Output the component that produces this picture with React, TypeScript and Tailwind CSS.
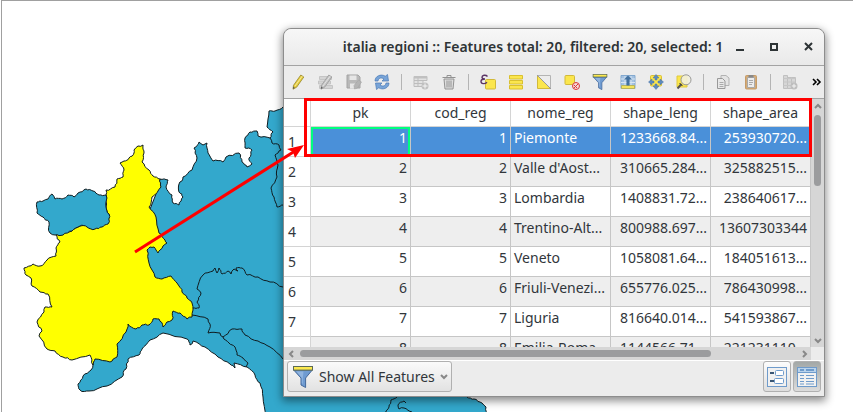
import type { ReactNode } from "react";

type Point = [number, number];

const rows = [
  ["1", "1", "Piemonte", "1233668.84...", "253930720..."],
  ["2", "2", "Valle d'Aost...", "310665.284...", "325882515..."],
  ["3", "3", "Lombardia", "1408831.72...", "238640617..."],
  ["4", "4", "Trentino-Alt...", "800988.697...", "13607303344"],
  ["5", "5", "Veneto", "1058081.64...", "184051613..."],
  ["6", "6", "Friuli-Venezi...", "655776.025...", "786430998..."],
  ["7", "7", "Liguria", "816640.014...", "541593867..."],
  ["8", "8", "Emilia-Roma...", "1144566.71...", "221231110..."],
];
const columns = ["pk", "cod_reg", "nome_reg", "shape_leng", "shape_area"];

const land =
  "160,179 168,180 166,187 172,195 173,203 179,205 183,197 179,192 179,184 183,177 192,170 197,158 194,148 199,142 203,145 207,143 208,153 213,161 223,162 226,157 239,153 242,162 247,167 252,164 249,158 252,150 245,148 245,138 250,132 257,131 258,136 270,138 273,132 267,127 269,111 275,111 283,107 400,107 460,380 467,397 474,399 482,403 486,407 488,416 266,416 263,397 260,383 255,375 247,367 234,363 235,368 230,364 218,357 205,347 193,341 190,345 187,339 163,333 150,340 142,349 139,355 128,359 126,369 122,377 107,386 89,391 80,390 78,384 83,376 91,370 93,365 100,340 140,300 140,240";
const piemonte =
  "106,195 106,190 115,187 117,179 123,177 124,170 120,163 124,161 129,158 134,153 134,150 138,146 143,145 144,153 142,162 149,170 153,176 160,179 161,187 152,197 149,207 156,217 159,233 165,240 167,243 163,246 160,250 158,253 156,250 154,247 150,247 147,250 149,263 155,277 162,279 171,276 177,283 182,292 187,298 192,303 192,317 187,319 180,313 173,311 172,320 167,322 163,327 159,319 153,319 149,325 142,325 136,329 128,324 126,332 117,344 117,357 110,362 95,359 93,365 90,355 72,360 63,357 55,351 47,349 39,336 42,331 37,322 44,312 45,307 52,307 48,294 40,292 32,286 31,278 26,275 24,268 33,264 40,266 47,260 56,256 56,248 60,242 56,235 72,231 80,226 108,223 109,214 106,207";
const valle =
  "37,202 43,201 48,199 52,194 55,199 62,199 68,195 74,197 78,193 86,189 93,191 99,195 106,195 106,207 109,214 108,224 102,227 95,229 87,227 80,226 72,231 63,235 55,235 50,233 49,222 43,217 37,213";
const borders = [
  "270,138 272,143 279,145 281,150 275,155 278,165 277,177 271,188 274,197 277,207 283,205",
  "193,308 199,308 197,302 201,293 197,289 203,275 213,271 215,268 217,273 219,268 222,274 228,271 231,274 234,269 238,271 236,268 242,268 247,275 258,277 270,282 283,287",
  "192,315 208,319 210,324 208,333 220,333 223,337 232,329 242,329 245,335 258,341 270,347 283,359",
  "223,337 229,343 235,347 237,355 243,358 248,363 246,367",
  "384,413 389,407 391,400 397,397",
  "412,412 404,408 399,409 398,405 404,401 406,403",
];

function parse(text: string): Point[] {
  return text.split(" ").map((pair) => pair.split(",").map(Number) as Point);
}

// Splits every segment and nudges the new points so that borders look surveyed.
function coastline(text: string, closed: boolean): string {
  let points = parse(text);
  for (let pass = 0; pass < 2; pass++) {
    const next: Point[] = [];
    points.forEach((a, i) => {
      next.push(a);
      if (i === points.length - 1 && !closed) return;
      const b = points[(i + 1) % points.length];
      const mx = (a[0] + b[0]) / 2;
      const my = (a[1] + b[1]) / 2;
      const length = Math.hypot(b[0] - a[0], b[1] - a[1]);
      if (length < 3) return;
      const wave = Math.sin(mx * 12.9898 + my * 78.233) * 43758.5453;
      const shift = (wave - Math.floor(wave) - 0.5) * Math.min(2, length * 0.4);
      const flip = b[0] > a[0] ? 1 : -1;
      next.push([
        mx - (flip * shift * (b[1] - a[1])) / length,
        my + (flip * shift * (b[0] - a[0])) / length,
      ]);
    });
    points = next;
  }
  return points.map((p) => `${p[0].toFixed(1)},${p[1].toFixed(1)}`).join(" ");
}

function RegionMap() {
  return (
    <svg className="absolute inset-0 h-full w-full" role="img" aria-label="Map of regions">
      <g stroke="#101c20" strokeWidth="1" strokeLinejoin="round">
        <polygon points={coastline(land, true)} fill="#33a8cc" />
        <polygon points={coastline(piemonte, true)} fill="#ffff00" />
        <polygon points={coastline(valle, true)} fill="#33a8cc" />
        {borders.map((b) => (
          <polyline key={b} points={coastline(b, false)} fill="none" />
        ))}
      </g>
    </svg>
  );
}

function Icon({ children }: { children: ReactNode }) {
  return (
    <svg width="16" height="16" viewBox="0 0 16 16" fill="none" aria-hidden="true">
      {children}
    </svg>
  );
}

function Funnel({ size }: { size: number }) {
  return (
    <svg width={size} height={size} viewBox="0 0 20 22" aria-hidden="true">
      <path d="M.7 4h18.6L12.6 12v9.5L8 19v-7z" fill="#6f9bd1" stroke="#44689a" />
      <path d="M3.5 5.5h7L9.8 12v6l-1-1v-5z" fill="#90b4df" />
      <rect x=".5" y=".5" width="19" height="3.6" fill="#fce94f" stroke="#5b6a55" />
    </svg>
  );
}

function Pencil({ fill, edge }: { fill: string; edge: string }) {
  return (
    <>
      <path d="M3.5 11.3 10.8 1l3 2-7.2 10.2-3.6 2z" fill={fill} stroke={edge} strokeWidth=".8" />
      <path d="m5 12 7.3-10" stroke="#fff" strokeOpacity=".5" />
      <path d="m3.3 12.6 1.5 1.2L3 15z" fill="#555" />
    </>
  );
}

const tools: ({ name: string; art: ReactNode } | null)[] = [
  { name: "Toggle editing mode", art: <Pencil fill="#e8cf3c" edge="#94852f" /> },
  {
    name: "Toggle multi edit mode",
    art: (
      <>
        <path d="M1.5 2.5h12v3h-12zM.5 7h12v3H.5zM1.5 11.5h13v3h-13z" fill="#d4d4d4" stroke="#c4c4c4" />
        <Pencil fill="#c4c4c4" edge="#999" />
      </>
    ),
  },
  {
    name: "Save edits",
    art: (
      <>
        <path d="M1 1h11l2 2v11H1z" fill="#b9b9b9" stroke="#a4a4a4" />
        <path d="M3.5 1.5h7V6h-7zM4 9.5h6v5H4z" fill="#e6e6e6" />
        <path d="M8 11.5 12.5 6l3 2-4 6-3 1z" fill="#b4b4b4" stroke="#a4a4a4" strokeWidth=".6" />
      </>
    ),
  },
  {
    name: "Reload the table",
    art: (
      <>
        <path d="M1 7C1 2 7-.5 11.3 2.2L13.5.5l1 6.5H8l2-2C7 3 4.5 4 4 7z" fill="#78a4d8" stroke="#4a7ab4" strokeWidth=".7" />
        <path d="M15 9c0 5-6 7.5-10.3 4.8L2.5 15.5 1.500 9H8l-2 2c3 2 5.500 1 6-2z" fill="#78a4d8" stroke="#4a7ab4" strokeWidth=".7" />
      </>
    ),
  },
  null,
  {
    name: "Add feature",
    art: (
      <>
        <path d="M1 2.500h13v4H1zM1 6.500h9v3H1zM1 9.500h9v3H1zM5 3v9" fill="#e2e2e2" stroke="#bdbdbd" />
        <path d="M1 2h13v2.500H1z" fill="#c0c0c0" />
        <circle cx="12" cy="12" r="3.500" fill="#c0c0c0" />
        <path d="M12 9.500v5M9.500 12h5" stroke="#f5f5f5" />
      </>
    ),
  },
  {
    name: "Delete selected features",
    art: (
      <>
        <path d="M3 5h10l-1 10H4z" fill="#ddd" stroke="#929292" />
        <path d="M1.500 3.500h13M6 3V1.500h4V3M6 6.500v7M8 6.500v7M10 6.500v7" stroke="#929292" />
      </>
    ),
  },
  null,
  {
    name: "Select features using an expression",
    art: (
      <>
        <rect x="5.500" y="5.500" width="10" height="9.500" rx="1" fill="#fbe64d" stroke="#d1b93a" />
        <path d="M7.500 2.500C5.500.3 2 1.300 2 3.200c0 1.300 1.200 1.800 3 1.800C2.500 5 1 6 1 7.500c0 2.500 4 2.800 6 .7" stroke="#5c3566" strokeWidth="1.400" />
      </>
    ),
  },
  {
    name: "Select all",
    art: <path d="M1.500 1.500h13V5h-13zM1.500 6.500h13V10h-13zM1.500 11.500h13V15h-13z" fill="#fbe64d" stroke="#d9c030" />,
  },
  {
    name: "Invert selection",
    art: (
      <>
        <path d="M1.500 1.500h13v13z" fill="#ececec" stroke="#b4b4b4" />
        <path d="M1.500 1.500v13h13z" fill="#fbe64d" stroke="#d1b93a" />
        <path d="m1 1 14 14" stroke="#999" />
      </>
    ),
  },
  {
    name: "Unselect all",
    art: (
      <>
        <rect x="1" y="1.500" width="9.500" height="9" rx="1" fill="#fbe64d" stroke="#d1b93a" />
        <circle cx="12" cy="12" r="3.500" fill="#f6dada" stroke="#d9393c" />
        <path d="m10 14 4-4M10 11l3 3" stroke="#d9393c" />
      </>
    ),
  },
  { name: "Filter using form", art: <Funnel size={16} /> },
  {
    name: "Move selection to top",
    art: (
      <>
        <path d="M1 1.500h14v13H1z" fill="#a4c2e2" stroke="#83a9cf" />
        <path d="M1 5h14M1 8.500h14M5 2v9M11 2v9" stroke="#d7e5f2" />
        <path d="M1.500 11.500h13v3h-13z" fill="#f4e35b" stroke="#b7b45c" />
        <path d="M8 1.500 12 5.500H9.500v6h-3v-6H4z" fill="#42709f" />
      </>
    ),
  },
  {
    name: "Pan map to the selected rows",
    art: (
      <>
        <rect x="2.500" y="1.500" width="11" height="10.500" rx="1" fill="#fbe64d" stroke="#d8bf35" />
        <path d="m8 .500 3 3.500H9v2H7V4H5zM8 15.500l3-3.500H9v-2H7v2H5zM.500 8 4 5v2h2v2H4v2zM15.500 8 12 5v2h-2v2h2v2z" fill="#5d8abd" stroke="#4a74a6" strokeWidth=".5" />
      </>
    ),
  },
  {
    name: "Zoom map to the selected rows",
    art: (
      <>
        <path d="M1 2h10v11H1z" fill="#fbe64d" stroke="#e0c93c" />
        <path d="m5.500 10-4 4.500" stroke="#555" strokeWidth="2" />
        <circle cx="10" cy="5.800" r="5" fill="#f2f0dd" fillOpacity=".9" stroke="#999" />
        <path d="m3.500 9 3 3" stroke="#333" />
      </>
    ),
  },
  null,
  {
    name: "Copy selected rows",
    art: (
      <>
        <path d="M6 1.500h5L14 4v7.500H6z" fill="#e4e4e4" stroke="#b3b3b3" />
        <path d="M2.500 4.500h5L10 7v7.500H2.500z" fill="#e8e8e8" stroke="#999" />
        <path d="M4.500 8.500h4M4.500 10.500h4M4.500 12.500h4" stroke="#aaa" />
      </>
    ),
  },
  {
    name: "Paste features",
    art: (
      <>
        <rect x="2.500" y="1.500" width="11" height="13.500" rx="1" fill="#d3ab78" stroke="#c59b68" />
        <path d="M4.500 3.500h7v10h-7z" fill="#ececec" stroke="#aaa" />
        <path d="M5.500 1h5v2.500h-5z" fill="#888" />
        <path d="M6 6.500h4M6 8.500h4M6 10.500h3" stroke="#aaa" />
      </>
    ),
  },
  null,
  {
    name: "Delete field",
    art: (
      <>
        <path d="M1.500 1.500h4v13h-4zM5.500 3.500h4v11h-4zM9.500 3.500h4v11h-4z" fill="#d6d6d6" stroke="#c0c0c0" />
        <path d="M1.500 4.500h12M1.500 8h12M1.500 11.500h12" stroke="#c6c6c6" />
        <circle cx="12" cy="12" r="3.500" fill="#bdbdbd" />
        <path d="M12 9.800v4.400M9.800 12h4.400" stroke="#f4f4f4" />
      </>
    ),
  },
];

function TitleBar() {
  return (
    <header className="flex h-9 items-center rounded-t-lg bg-linear-to-b from-[#f7f7f7] to-[#e9e9e9] pr-2 pl-12">
      <h1 className="flex-1 text-center text-sm font-semibold whitespace-nowrap text-[#2e3436]">
        italia regioni :: Features total: 20, filtered: 20, selected: 1
      </h1>
      <div className="flex gap-5 text-[#2e3436]">
        <button aria-label="Minimize" className="h-4 w-[14px]">
          <svg width="14" height="16" aria-hidden="true">
            <path d="M2 11h8" stroke="currentColor" strokeWidth="2" />
          </svg>
        </button>
        <button aria-label="Maximize" className="h-4 w-[14px]">
          <svg width="14" height="16" aria-hidden="true">
            <path d="M3 5h6v6H3z" fill="none" stroke="currentColor" strokeWidth="2" />
          </svg>
        </button>
        <button aria-label="Close" className="h-4 w-[14px]">
          <svg width="14" height="16" aria-hidden="true">
            <path d="m3 4 7 7m0-7-7 7" stroke="currentColor" strokeWidth="2" />
          </svg>
        </button>
      </div>
    </header>
  );
}

function Toolbar() {
  return (
    <div role="toolbar" className="flex h-[34px] items-center border-y border-[#a3a3a3] bg-[#ececec]">
      {tools.map((tool, i) =>
        tool ? (
          <button key={tool.name} aria-label={tool.name} className="flex h-7 w-7 items-center justify-center">
            <Icon>{tool.art}</Icon>
          </button>
        ) : (
          <span key={i} className="mx-[5px] h-4 w-px bg-[#b4b4b4]" />
        ),
      )}
      <button aria-label="More tools" className="ml-auto flex h-7 w-3 items-center">
        <svg width="10" height="8" aria-hidden="true">
          <path d="m1 1 3 3-3 3m4-6 3 3-3 3" fill="none" stroke="#000" strokeWidth="1.600" />
        </svg>
      </button>
    </div>
  );
}

function AttributeTable() {
  return (
    <div className="h-[248px] flex-1 overflow-hidden bg-white">
      <table className="w-[527px] table-fixed border-separate border-spacing-0">
        <colgroup>
          <col className="w-[27px]" />
          {columns.map((c) => (
            <col key={c} className="w-[100px]" />
          ))}
        </colgroup>
        <thead>
          <tr className="h-7">
            <td className="border-r border-b border-[#d4d4d4] p-0" />
            {columns.map((c) => (
              <th key={c} scope="col" className="border-r border-b border-[#d4d4d4] p-0 text-center font-normal">
                {c}
              </th>
            ))}
          </tr>
        </thead>
        <tbody>
          {rows.map((row, r) => {
            const tone = r === 0 ? "bg-[#4a90d9] text-white" : r % 2 ? "bg-[#eeeeee]" : "bg-white";
            return (
              <tr key={row[0]} className="h-[30px]">
                <th scope="row" className="border-r border-b border-[#d4d4d4] p-0 pl-1 text-left font-normal">
                  {row[0]}
                </th>
                {row.map((value, c) => (
                  <td
                    key={c}
                    className={`border-r border-b border-[#c6c6c6] p-0 px-[3px] align-top leading-[22px] whitespace-nowrap ${
                      c === 2 ? "text-left" : "text-right"
                    } ${tone} ${r === 0 && c === 0 ? "shadow-[inset_0_0_0_2px_#00ff7f]" : ""}`}
                  >
                    {value}
                  </td>
                ))}
              </tr>
            );
          })}
        </tbody>
      </table>
    </div>
  );
}

function Arrow({ label, d }: { label: string; d: string }) {
  return (
    <button aria-label={label} className="flex h-[13px] w-[13px] shrink-0 items-center justify-center">
      <svg width="8" height="8" aria-hidden="true">
        <path d={d} fill="none" stroke="#888" strokeWidth="2" />
      </svg>
    </button>
  );
}

function FeatureWindow() {
  return (
    <section className="relative rounded-t-lg border border-[#8d8d8d] bg-[#ececec] shadow-[0_3px_8px_1px_rgba(0,0,0,0.45)]">
      <TitleBar />
      <Toolbar />
      <div className="flex">
        <AttributeTable />
        <div className="flex w-[13px] flex-col items-center bg-[#d6d6d6]">
          <Arrow label="Scroll up" d="m1 6 3-3 3 3" />
          <div className="mt-[3px] h-[71px] w-[7px] rounded-full bg-[#9b9c9e]" />
          <span className="flex-1" />
          <Arrow label="Scroll down" d="m1 2 3 3 3-3" />
        </div>
      </div>
      <div className="flex border-b border-white pr-[13px]">
        <div className="flex h-[13px] flex-1 items-center bg-[#d6d6d6]">
          <Arrow label="Scroll left" d="M6 1 3 4l3 3" />
          <div className="ml-[3px] h-[7px] w-[411px] rounded-full bg-[#9b9c9e]" />
          <span className="flex-1" />
          <Arrow label="Scroll right" d="m2 1 3 3-3 3" />
        </div>
      </div>
      <footer className="flex h-[35px] items-start justify-between px-[3px]">
        <button className="flex h-[31px] items-center rounded-[3px] border border-[#b0b0b0] bg-linear-to-b from-[#fafafa] to-[#e2e2e2] pr-[3px] pl-1">
          <Funnel size={22} />
          <span className="px-[5px]">Show All Features</span>
          <svg width="8" height="8" aria-hidden="true">
            <path d="m1 2 3 3 3-3" fill="none" stroke="#888" strokeWidth="2" />
          </svg>
        </button>
        <div className="flex gap-0.5">
          <button
            aria-label="Form view"
            className="flex h-[31px] w-7 items-center justify-center rounded-[3px] border border-[#b0b0b0] bg-linear-to-b from-[#fcfcfc] to-[#dedede]"
          >
            <svg width="20" height="20" aria-hidden="true">
              <rect x=".5" y=".5" width="19" height="19" fill="#f1f1f1" stroke="#6f9bcb" />
              <rect x="8.500" y="3.500" width="8" height="5" rx="1" fill="#fff" stroke="#6f9bcb" />
              <rect x="7.500" y="11.500" width="9" height="5" rx="1" fill="#fff" stroke="#6f9bcb" />
              <path d="M3 6h4M3 14h4" stroke="#3a5674" strokeWidth="2" />
            </svg>
          </button>
          <button
            aria-label="Table view"
            aria-pressed="true"
            className="flex h-[31px] w-7 items-center justify-center rounded-[3px] border border-[#b0b0b0] bg-linear-to-b from-[#a3a8a7] to-[#dcdcdc]"
          >
            <svg width="20" height="20" aria-hidden="true">
              <rect x=".5" y=".5" width="19" height="19" fill="#f1f1f1" stroke="#6f9bcb" />
              <path d="M1 1h18v4.500H1z" fill="#b9d3ec" />
              <path d="M3 3h4M9 3h8" stroke="#6f9bcb" strokeWidth="2" />
              <path d="M1 5.500h18M3 8.500h4M9 8.500h8M3 11.500h4M9 11.500h8M3 14.500h4M9 14.500h8M3 17h4M9 17h8" stroke="#6f9bcb" />
            </svg>
          </button>
        </div>
      </footer>
    </section>
  );
}

export default function App() {
  return (
    <main className="relative min-h-screen overflow-hidden bg-white pt-7 pr-7 pl-[283px] font-['Noto_Sans','Open_Sans',sans-serif] text-sm text-[#31363b]">
      <RegionMap />
      <div className="absolute inset-0 left-px border-t border-l border-[#a0a0a0]" />
      <FeatureWindow />
      <svg className="pointer-events-none absolute inset-0 h-full w-full" aria-hidden="true">
        <rect x="305.500" y="99.500" width="505" height="56" fill="none" stroke="#f00" strokeWidth="3" />
        <path d="m135 252 160-101" stroke="#f00" strokeWidth="3" />
        <path d="m304 145-9 13-2-6-6-3z" fill="#f00" />
      </svg>
    </main>
  );
}
